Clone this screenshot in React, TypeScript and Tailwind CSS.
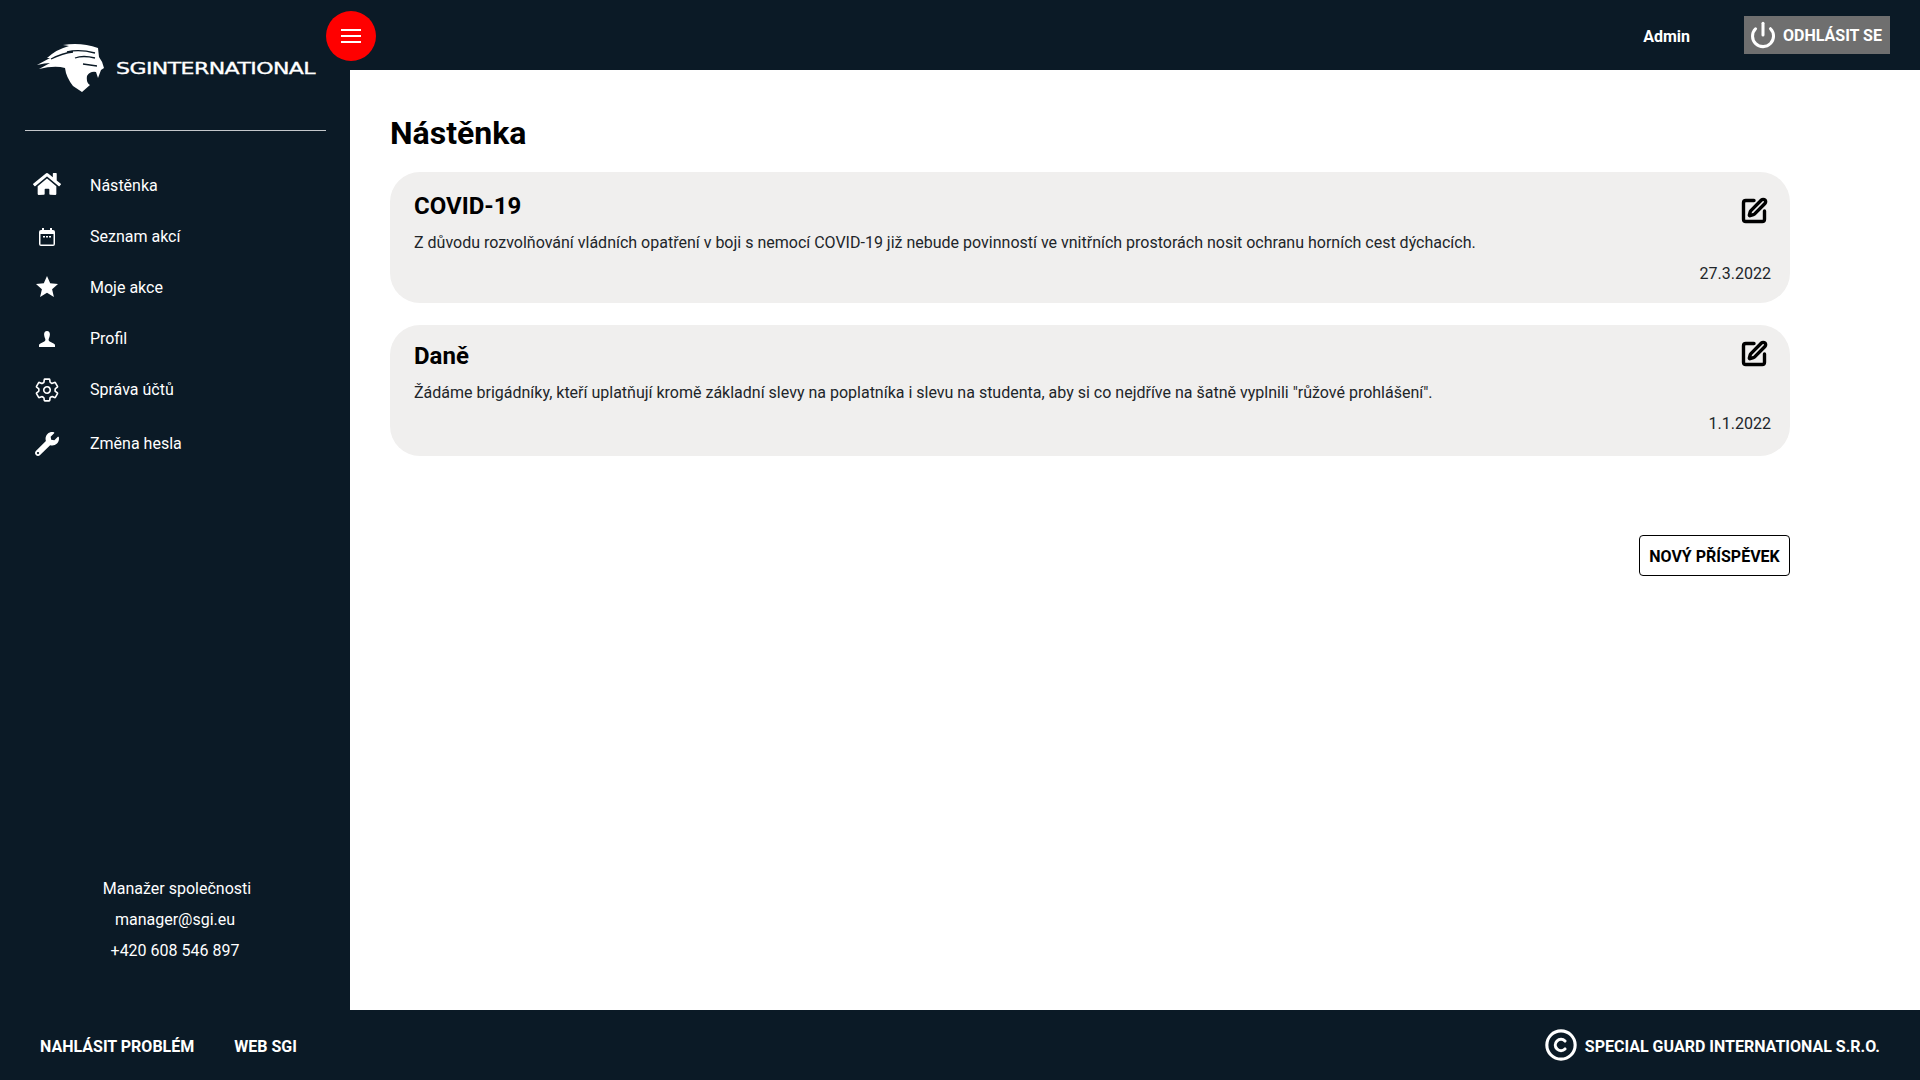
import { FaHome, FaWrench } from "react-icons/fa";
import { IoSettingsOutline } from "react-icons/io5";
import { Copyright, Power, SquarePen } from "lucide-react";

function LionLogo() {
  return (
    <svg width="70" height="50" viewBox="0 0 70 50" className="shrink-0">
      <path
        fill="#fff"
        d="M0 22 L13 15 L10 15 Q20 6 32 3 L26 2 Q44 -1 61 5 L62 14 Q66 19 67 25 L64 27 L61 35 L59 29 Q53 28 50 33 Q49 40 53 42 L45 49 L36 43 Q29 34 28 25 Q18 22 2 26 L13 20 Q8 20 0 22 Z"
      />
      <path stroke="#0b1a26" strokeWidth="1.300" fill="none" d="M14 16 Q26 10 36 9 M30 9 Q42 6 58 10 M38 15 Q46 12 58 15 M46 21 L60 23" />
    </svg>
  );
}

function CalendarIcon() {
  return (
    <svg width="16" height="18" viewBox="0 0 16 18" fill="none">
      <path fill="#fff" d="M3 0h2v2h6V0h2v2h1a2 2 0 0 1 2 2v12a2 2 0 0 1-2 2H2a2 2 0 0 1-2-2V4a2 2 0 0 1 2-2h1V0Z" />
      <rect x="1.500" y="6" width="13" height="10.500" fill="#0b1a26" />
      <rect x="4" y="8" width="2" height="1.500" fill="#fff" />
      <rect x="7" y="8" width="2" height="1.500" fill="#fff" />
      <rect x="10" y="8" width="2" height="1.500" fill="#fff" />
    </svg>
  );
}

function BustIcon() {
  return (
    <svg width="16" height="16" viewBox="0 0 16 16">
      <path fill="#fff" d="M8 0c2 0 3 1.600 2.900 3.600-.1 1.800-.7 3.300-1.200 4.400-.3 1 .1 1.900 1 2.400l3.900 2.200c.9.500 1.400 1 1.400 1.700V16H0v-1.700c0-.7.500-1.200 1.400-1.700l3.900-2.200c.9-.5 1.300-1.400 1-2.400-.5-1.100-1.100-2.600-1.200-4.400C5 1.600 6 0 8 0Z" />
    </svg>
  );
}

function StarIcon() {
  return (
    <svg width="22" height="21" viewBox="0 0 22 21" className="-mt-[2px]">
      <polygon fill="#fff" points="11,0 14.200,7.300 22,8 16.100,13.200 17.900,21 11,16.800 4.100,21 5.900,13.200 0,8 7.800,7.300" />
    </svg>
  );
}

const navItems = [
  { label: "Nástěnka", icon: <FaHome size={28} className="-mt-[3px]" />, h: "h-[51px]" },
  { label: "Seznam akcí", icon: <CalendarIcon />, h: "h-[51px]" },
  { label: "Moje akce", icon: <StarIcon />, h: "h-[51px]" },
  { label: "Profil", icon: <BustIcon />, h: "h-[51px]" },
  { label: "Správa účtů", icon: <IoSettingsOutline size={26} />, h: "h-[51px]" },
  { label: "Změna hesla", icon: <FaWrench size={24} />, h: "h-[57px]" },
];

const posts = [
  {
    title: "COVID-19",
    text: "Z důvodu rozvolňování vládních opatření v boji s nemocí COVID-19 již nebude povinností ve vnitřních prostorách nosit ochranu horních cest dýchacích.",
    date: "27.3.2022",
    pad: "pt-[18px]",
    iconTop: "top-[25px]",
  },
  {
    title: "Daně",
    text: 'Žádáme brigádníky, kteří uplatňují kromě základní slevy na poplatníka i slevu na studenta, aby si co nejdříve na šatně vyplnili "růžové prohlášení".',
    date: "1.1.2022",
    pad: "pt-[15px]",
    iconTop: "top-[15px]",
  },
];

export default function App() {
  return (
    <div className="relative flex h-[1080px] w-[1920px] flex-col overflow-hidden bg-[#0b1a26] font-['Roboto',sans-serif] text-white">
      <div className="flex h-[1010px]">
        {/* sidebar */}
        <aside className="flex w-[350px] shrink-0 flex-col">
          <div className="mx-[25px] flex h-[131px] w-[301px] items-start gap-[9px] border-b border-[#c4c7ca] pt-[43px] pl-[12px]">
            <LionLogo />
            <span className="mt-[16px] origin-left scale-x-[1.47] font-['DejaVu_Sans',sans-serif] text-[15px] leading-[20px] font-medium tracking-[-0.4px] whitespace-nowrap [-webkit-text-stroke:0.3px_white]">
              SGINTERNATIONAL
            </span>
          </div>
          <nav className="mt-[29px] flex flex-col">
            {navItems.map((item) => (
              <div key={item.label} className={`flex items-center ${item.h}`}>
                <div className="flex w-[90px] justify-center pl-[3px]">{item.icon}</div>
                <span className="text-base">{item.label}</span>
              </div>
            ))}
          </nav>
          <div className="mt-[401px] flex flex-col items-center text-base leading-[31px]">
            <span className="pl-[4px]">Manažer společnosti</span>
            <span>manager@sgi.eu</span>
            <span>+420 608 546 897</span>
          </div>
        </aside>

        <div className="flex flex-1 flex-col">
          <header className="flex h-[70px] items-center justify-end pr-[30px]">
            <span className="mt-[3px] mr-[54px] text-base font-bold">Admin</span>
            <button className="flex h-[38px] w-[146px] items-center gap-[6px] bg-[#6f6f6f] pl-[5px] text-base font-bold">
              <Power size={28} strokeWidth={2.6} />
              <span className="mt-[2px]">ODHLÁSIT SE</span>
            </button>
          </header>
          <main className="flex-1 bg-white px-[40px] pt-[43px] text-black">
            <div className="w-[1400px]">
              <h1 className="mb-[19px] text-[32px] leading-[40px] font-bold">Nástěnka</h1>
              <div className="flex flex-col gap-[22px]">
                {posts.map((post) => (
                  <div key={post.title} className={`relative h-[131px] rounded-[30px] bg-[#f0efee] px-[24px] ${post.pad}`}>
                    <h2 className="text-2xl leading-[32px] font-bold">{post.title}</h2>
                    <p className="mt-[9px] text-base leading-[24px] text-[#212529]">{post.text}</p>
                    <p className="-mr-[5px] mt-[7px] text-right text-base leading-[24px] text-[#212529]">{post.date}</p>
                    <SquarePen size={28} strokeWidth={2.9} className={`absolute right-[22px] ${post.iconTop}`} />
                  </div>
                ))}
              </div>
              <div className="mt-[79px] flex justify-end">
                <button className="h-[41px] w-[151px] rounded-[4px] border border-black pt-[2px] text-base font-bold">
                  NOVÝ PŘÍSPĚVEK
                </button>
              </div>
            </div>
          </main>
        </div>
      </div>

      <footer className="flex h-[70px] items-center justify-between px-[40px] text-base font-bold">
        <div className="mt-[3px] flex gap-[40px]">
          <span>NAHLÁSIT PROBLÉM</span>
          <span>WEB SGI</span>
        </div>
        <div className="flex items-center gap-[7px]">
          <Copyright size={34} strokeWidth={2.2} />
          <span className="mt-[3px]">SPECIAL GUARD INTERNATIONAL S.R.O.</span>
        </div>
      </footer>

      {/* menu toggle sits over the sidebar edge */}
      <button className="absolute top-[11px] left-[326px] flex h-[50px] w-[50px] flex-col items-center justify-center gap-[4px] rounded-full bg-[#ff0000]">
        <span className="h-[2px] w-[20px] bg-white" />
        <span className="h-[2px] w-[20px] bg-white" />
        <span className="h-[2px] w-[20px] bg-white" />
      </button>
    </div>
  );
}
